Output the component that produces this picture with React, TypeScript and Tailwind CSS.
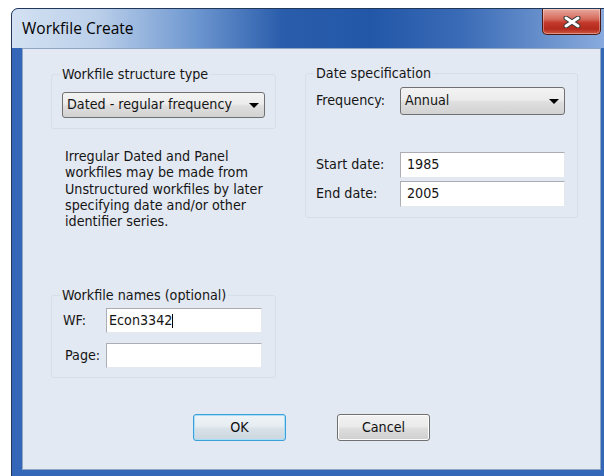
import type { ReactNode } from "react";

const face = "font-['DejaVu_Sans_Condensed','Open_Sans',sans-serif]";

function GroupBox({ title, className = "", children }: { title: string; className?: string; children: ReactNode }) {
  return (
    <fieldset className={`rounded-[3px] border border-[#d5dfe5] ${className}`}>
      <legend className="ml-[-2px] px-[2px] leading-[16px]">{title}</legend>
      {children}
    </fieldset>
  );
}

function ComboBox({ value, className = "" }: { value: string; className?: string }) {
  return (
    <div
      className={`flex items-center justify-between rounded-[3px] border border-[#707070] bg-[linear-gradient(#f3f3f3,#ececec_45%,#dedede_55%,#d2d2d2)] pl-[4px] pr-[5px] ${className}`}
    >
      <span>{value}</span>
      <svg width="10" height="5" viewBox="0 0 10 5">
        <path d="M0 0h10L5 5z" fill="#000" />
      </svg>
    </div>
  );
}

function TextField({ value = "", caret = false, className = "" }: { value?: string; caret?: boolean; className?: string }) {
  return (
    <div
      className={`flex items-center border border-[#abadb3] border-r-[#e3e9ef] border-b-[#e3e9ef] bg-white ${className}`}
    >
      <span>{value}</span>
      {caret ? <span className="h-[14px] w-px bg-black" /> : null}
    </div>
  );
}

function PushButton({ label, isDefault = false }: { label: string; isDefault?: boolean }) {
  return (
    <button
      className={[
        "h-[27px] w-[93px] rounded-[3px] border text-[#111]",
        isDefault
          ? "border-[#3c9fd8] bg-[linear-gradient(#eef3f7,#e6edf2_45%,#d8e1e8_55%,#ccd6de)] shadow-[inset_0_0_0_1px_#a8def8]"
          : "border-[#707070] bg-[linear-gradient(#f2f2f2,#ebebeb_45%,#dddddd_55%,#cfcfcf)] shadow-[inset_0_0_0_1px_#fcfcfc]",
      ].join(" ")}
    >
      {label}
    </button>
  );
}

export default function App() {
  return (
    <div className={`h-[476px] w-[604px] overflow-hidden bg-white ${face} text-[14.2px] text-[#151515]`}>
      <div className="ml-[11px] mt-[8px] flex h-[476px] w-[601px] flex-col rounded-t-[7px] border border-[#22385a] bg-[#3567b8]">
        {/* caption */}
        <div className="flex h-[39px] items-start justify-between rounded-t-[6px] bg-[linear-gradient(to_right,#d3e1f2_0%,#bcd0ea_14%,#7099d1_30%,#2a5dab_45%,#2257a8_60%,#3a6bb6_75%,#7399d1_92%,#8cade0_100%)]">
          <span className="self-center pl-[10px] font-['Open_Sans',sans-serif] text-[15.5px] text-black">Workfile Create</span>
          <div className="mr-[10px] flex h-[26px] w-[59px] items-center justify-center rounded-b-[5px] border border-t-0 border-[#4b1812] bg-[linear-gradient(#e9a99e,#d56b5c_40%,#c2392b_55%,#b42a1d_80%,#d05a42)] shadow-[inset_0_0_0_1px_rgba(255,255,255,0.35)]">
            <svg width="18" height="12" viewBox="0 0 18 12">
              <path d="M3 2l12 8M15 2L3 10" stroke="#3a3a3a" strokeWidth="5" strokeLinecap="round" />
              <path d="M3 2l12 8M15 2L3 10" stroke="#fff" strokeWidth="3" strokeLinecap="round" />
            </svg>
          </div>
        </div>

        {/* client area */}
        <div className="ml-[10px] flex h-[422px] w-[579px] flex-col border border-[#8fa6c4] bg-[#e3e9f2]">
          <div className="flex items-start pl-[28px] pt-[17px]">
            <div className="flex w-[225px] flex-col">
              <GroupBox title="Workfile structure type" className="px-[10px] pb-[10px] pt-[10px]">
                <ComboBox value="Dated - regular frequency" className="h-[26px] w-[203px]" />
              </GroupBox>

              <p className="mt-[19px] pl-[14px] leading-[16.25px]">
                Irregular Dated and Panel
                <br />
                workfiles may be made from
                <br />
                Unstructured workfiles by later
                <br />
                specifying date and/or other
                <br />
                identifier series.
              </p>

              <GroupBox title="Workfile names (optional)" className="mt-[58px] px-[10px] pb-[9px] pt-[5px]">
                <div className="flex flex-col gap-[10px]">
                  <div className="flex items-center">
                    <span className="w-[44px] pl-[1px]">WF:</span>
                    <TextField value="Econ3342" caret className="h-[25px] w-[156px] pl-[2px]" />
                  </div>
                  <div className="flex items-center">
                    <span className="w-[44px] pl-[3px]">Page:</span>
                    <TextField className="h-[25px] w-[156px] pl-[2px]" />
                  </div>
                </div>
              </GroupBox>
            </div>

            <GroupBox title="Date specification" className="ml-[29px] mt-[-1px] w-[273px] pb-[10px] pl-[10px] pt-[6px]">
              <div className="flex items-center">
                <span className="w-[84px]">Frequency:</span>
                <ComboBox value="Annual" className="h-[28px] w-[165px]" />
              </div>
              <div className="mt-[37px] flex items-center">
                <span className="w-[84px]">Start date:</span>
                <TextField value="1985" className="h-[26px] w-[165px] pl-[6px]" />
              </div>
              <div className="mt-[3px] flex items-center">
                <span className="w-[84px]">End date:</span>
                <TextField value="2005" className="h-[26px] w-[165px] pl-[6px]" />
              </div>
            </GroupBox>
          </div>

          <div className="mt-[36px] flex justify-center gap-[51px]">
            <PushButton label="OK" isDefault />
            <PushButton label="Cancel" />
          </div>
        </div>
      </div>
    </div>
  );
}
